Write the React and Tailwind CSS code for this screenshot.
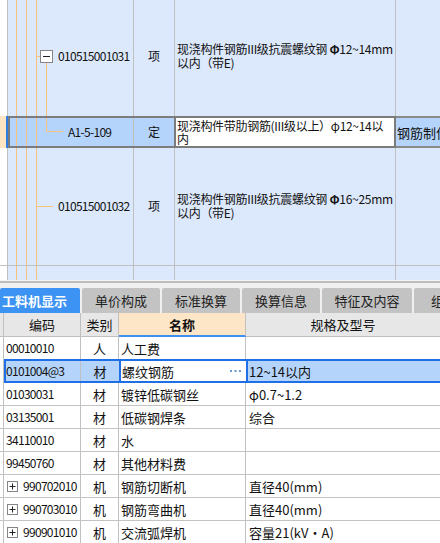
import React from "react";

const ORANGE = "#f8c27c";

function Guides({ w, h, offs, children }) {
  return (
    <svg width={w} height={h} className="block shrink-0">
      {offs.map((x) => (
        <line key={x} x1={x + 0.5} y1={0} x2={x + 0.5} y2={h} stroke={ORANGE} strokeWidth="1" />
      ))}
      {children}
    </svg>
  );
}

function PlusBox() {
  return (
    <svg width="11" height="11" className="block shrink-0">
      <rect x="0.5" y="0.5" width="10" height="10" fill="white" stroke="#858585" />
      <line x1="2.5" y1="5.5" x2="8.5" y2="5.5" stroke="#222" />
      <line x1="5.5" y1="2.5" x2="5.5" y2="8.5" stroke="#222" />
    </svg>
  );
}

function Dots() {
  return (
    <svg width="11" height="3" className="block shrink-0">
      <rect x="0" y="0" width="2" height="2" fill="#6a9ad6" />
      <rect x="4.5" y="0" width="2" height="2" fill="#6a9ad6" />
      <rect x="9" y="0" width="2" height="2" fill="#6a9ad6" />
    </svg>
  );
}

function TopRow({ h, code, guides, desc1, desc2, bordered, textShift }) {
  return (
    <div className={`flex shrink-0 ${bordered ? "border-b border-[#bfbfbf]" : ""}`} style={{ height: h }}>
      <div className="w-[8px] shrink-0 bg-white border-r border-[#bfbfbf]" />
      <div className="w-[126px] shrink-0 border-r border-[#bfbfbf] flex items-center overflow-hidden">
        {guides}
        {code && (
          <span className="text-[12px] leading-[14px] tracking-[-0.7px] whitespace-nowrap" style={{ marginTop: textShift }}>
            {code}
          </span>
        )}
      </div>
      <div className="w-[41px] shrink-0 border-r border-[#bfbfbf] flex items-center justify-center">
        {code && <span className="text-[12px] leading-[14px]" style={{ marginTop: textShift }}>项</span>}
      </div>
      <div className="w-[221px] shrink-0 border-r border-[#bfbfbf] pl-[2px] flex flex-col justify-center overflow-hidden">
        {desc1 && (
          <div style={{ marginTop: textShift }}>
            <div className="text-[12px] leading-[14px] tracking-[-0.3px] whitespace-nowrap">{desc1}</div>
            <div className="text-[12px] leading-[14px] tracking-[-0.3px] whitespace-nowrap">{desc2}</div>
          </div>
        )}
      </div>
      <div className="flex-1" />
    </div>
  );
}

const lowerRows = [
  { code: "00010010", type: "人", name: "人工费", spec: "" },
  { code: "0101004@3", type: "材", name: "螺纹钢筋", spec: "12~14以内", sel: true },
  { code: "01030031", type: "材", name: "镀锌低碳钢丝", spec: "φ0.7~1.2" },
  { code: "03135001", type: "材", name: "低碳钢焊条", spec: "综合" },
  { code: "34110010", type: "材", name: "水", spec: "" },
  { code: "99450760", type: "材", name: "其他材料费", spec: "" },
  { code: "990702010", type: "机", name: "钢筋切断机", spec: "直径40(mm)", plus: true },
  { code: "990703010", type: "机", name: "钢筋弯曲机", spec: "直径40(mm)", plus: true },
  { code: "990901010", type: "机", name: "交流弧焊机", spec: "容量21(kV・A)", plus: true },
];

function LowerRow({ r, first }) {
  if (r.sel) {
    return (
      <div className="flex h-[24px] shrink-0">
        <div className="w-[4px] shrink-0 bg-white border-r border-[#c0c0c0]" />
        <div className="w-[450px] shrink-0 flex border-2 border-[#1f6fe6]">
          <div className="w-[75px] shrink-0 bg-[#b4d4fb] border-r border-[#c0c0c0] flex items-center">
            <span className="text-[12px] leading-[14px] tracking-[-0.7px] whitespace-nowrap">{r.code}</span>
          </div>
          <div className="w-[38px] shrink-0 bg-[#b4d4fb] flex items-center justify-center text-[13px] leading-[15px]">
            {r.type}
          </div>
          <div className="w-[129px] shrink-0 bg-white border-x-2 border-[#1f6fe6] flex items-center justify-between pl-[1px] pr-[5px]">
            <span className="text-[13px] leading-[15px] whitespace-nowrap">{r.name}</span>
            <Dots />
          </div>
          <div className="flex-1 bg-[#b4d4fb] flex items-center pl-[1px]">
            <span className="text-[13px] leading-[15px] whitespace-nowrap">{r.spec}</span>
          </div>
        </div>
      </div>
    );
  }
  return (
    <div className={`flex shrink-0 bg-white ${first ? "h-[22px]" : "h-[23px] border-b border-[#c4c4c4]"}`}>
      <div className="w-[4px] shrink-0 border-r border-[#c0c0c0]" />
      <div className="w-[77px] shrink-0 border-r border-[#c0c0c0] flex items-center pl-[2px] overflow-hidden">
        {r.plus && (
          <>
            <span className="w-[1px] shrink-0" />
            <PlusBox />
            <span className="w-[5px] shrink-0" />
          </>
        )}
        <span className="text-[12px] leading-[14px] tracking-[-0.7px] whitespace-nowrap">{r.code}</span>
      </div>
      <div className="w-[38px] shrink-0 border-r border-[#c0c0c0] flex items-center justify-center text-[13px] leading-[15px]">
        {r.type}
      </div>
      <div className="w-[127px] shrink-0 border-r border-[#c0c0c0] flex items-center pl-[2px]">
        <span className="text-[13px] leading-[15px] whitespace-nowrap">{r.name}</span>
      </div>
      <div className="flex-1 flex items-center pl-[3px]">
        <span className="text-[13px] leading-[15px] whitespace-nowrap">{r.spec}</span>
      </div>
    </div>
  );
}

export default function App() {
  return (
    <div className="w-[440px] h-[543px] overflow-hidden bg-white text-[#111] font-['Noto_Sans_CJK_SC','Liberation_Sans',sans-serif] flex flex-col">
      {/* upper tree grid */}
      <div className="flex flex-col bg-[#dce8fb] shrink-0">
        <TopRow
          h={116}
          code="010515001031"
          textShift={-4}
          guides={
            <Guides w={50} h={116} offs={[8, 18, 28]}>
              <line x1="28.5" y1="56.5" x2="32" y2="56.5" stroke={ORANGE} />
              <line x1="38.5" y1="62" x2="38.5" y2="116" stroke={ORANGE} />
              <rect x="32.5" y="50.5" width="12" height="12" fill="white" stroke="#858585" />
              <line x1="35" y1="56.5" x2="42" y2="56.5" stroke="#222" />
            </Guides>
          }
          desc1={<>现浇构件钢筋III级抗震螺纹钢 <b>Φ</b>12~14mm</>}
          desc2="以内（带E)"
        />
        {/* selected row */}
        <div className="flex h-[32px] shrink-0">
          <div className="w-[8px] shrink-0 flex">
            <div className="w-[6px] bg-[#fde4c2]" />
            <div className="w-[2px] bg-[#2f7de1]" />
          </div>
          <div className="w-[388px] shrink-0 flex border-2 border-[#7c7c7c]">
            <div className="w-[124px] shrink-0 border-r border-[#bfbfbf] bg-[#b4d4fb] flex items-center overflow-hidden">
              <Guides w={58} h={28} offs={[6, 16, 26]}>
                <line x1="36.5" y1="0" x2="36.5" y2="13.5" stroke={ORANGE} />
                <line x1="36.5" y1="13.5" x2="53" y2="13.5" stroke={ORANGE} />
              </Guides>
              <span className="text-[12px] leading-[14px] tracking-[-0.7px] whitespace-nowrap">A1-5-109</span>
            </div>
            <div className="w-[40px] shrink-0 bg-[#b4d4fb] flex items-center justify-center text-[12px] leading-[14px]">
              定
            </div>
            <div className="flex-1 bg-white border-l-2 border-[#7c7c7c] pl-[1px] flex flex-col justify-center overflow-hidden">
              <div className="text-[12px] leading-[13px] tracking-[-0.3px] whitespace-nowrap">现浇构件带肋钢筋(III级以上）φ12~14以</div>
              <div className="text-[12px] leading-[13px] whitespace-nowrap">内</div>
            </div>
          </div>
          <div className="flex-1 bg-[#b4d4fb] border-y-2 border-[#8a8a8a] flex items-center pl-[1px] overflow-hidden">
            <span className="text-[13px] leading-[15px] whitespace-nowrap">钢筋制作</span>
          </div>
        </div>
        <TopRow
          h={118}
          bordered
          code="010515001032"
          textShift={-2}
          guides={
            <Guides w={50} h={117} offs={[8, 18, 28]}>
              <line x1="28.5" y1="58.5" x2="45" y2="58.5" stroke={ORANGE} />
            </Guides>
          }
          desc1={<>现浇构件钢筋III级抗震螺纹钢 <b>Φ</b>16~25mm</>}
          desc2="以内（带E)"
        />
        <TopRow h={14} guides={<Guides w={50} h={14} offs={[8, 18, 28]} />} />
      </div>

      {/* separator + tabs */}
      <div className="h-[1px] bg-[#f4f4f4] shrink-0" />
      <div className="h-[2px] bg-[#bcbcbc] shrink-0" />
      <div className="h-[5px] bg-[#f0f0f0] shrink-0" />
      <div className="h-[25px] bg-[#f0f0f0] flex gap-[2px] shrink-0">
        <div className="w-[80px] shrink-0 bg-[#3d93f4] rounded-t-[2px] flex items-center pl-[2px] text-white font-bold text-[13px] leading-[15px] whitespace-nowrap">
          工料机显示
        </div>
        {[
          ["单价构成", 78],
          ["标准换算", 78],
          ["换算信息", 78],
          ["特征及内容", 90],
          ["组成", 60],
        ].map(([t, w]) => (
          <div
            key={t}
            className="shrink-0 bg-[#c3c3c3] rounded-t-[2px] flex items-center justify-center text-[13px] leading-[15px] text-[#222] whitespace-nowrap overflow-hidden"
            style={{ width: w }}
          >
            {t}
          </div>
        ))}
      </div>

      {/* lower table header */}
      <div className="flex h-[24px] shrink-0 bg-[#e7e7e7]">
        <div className="w-[4px] shrink-0 border-r border-b border-[#c0c0c0]" />
        <div className="w-[77px] shrink-0 border-r border-b border-[#c0c0c0] flex items-center justify-center text-[13px] leading-[15px]">
          编码
        </div>
        <div className="w-[38px] shrink-0 border-r border-b border-[#c0c0c0] flex items-center justify-center text-[13px] leading-[15px]">
          类别
        </div>
        <div className="w-[127px] shrink-0 border-r border-[#c0c0c0] border-b-2 border-b-[#3d8ff0] bg-[#fde6c8] flex items-center justify-center text-[13px] leading-[15px] font-bold">
          名称
        </div>
        <div className="flex-1 border-b border-[#c0c0c0] flex items-center justify-center text-[13px] leading-[15px]">
          规格及型号
        </div>
      </div>
      {lowerRows.map((r, i) => (
        <LowerRow key={r.code} r={r} first={i === 0} />
      ))}
    </div>
  );
}
